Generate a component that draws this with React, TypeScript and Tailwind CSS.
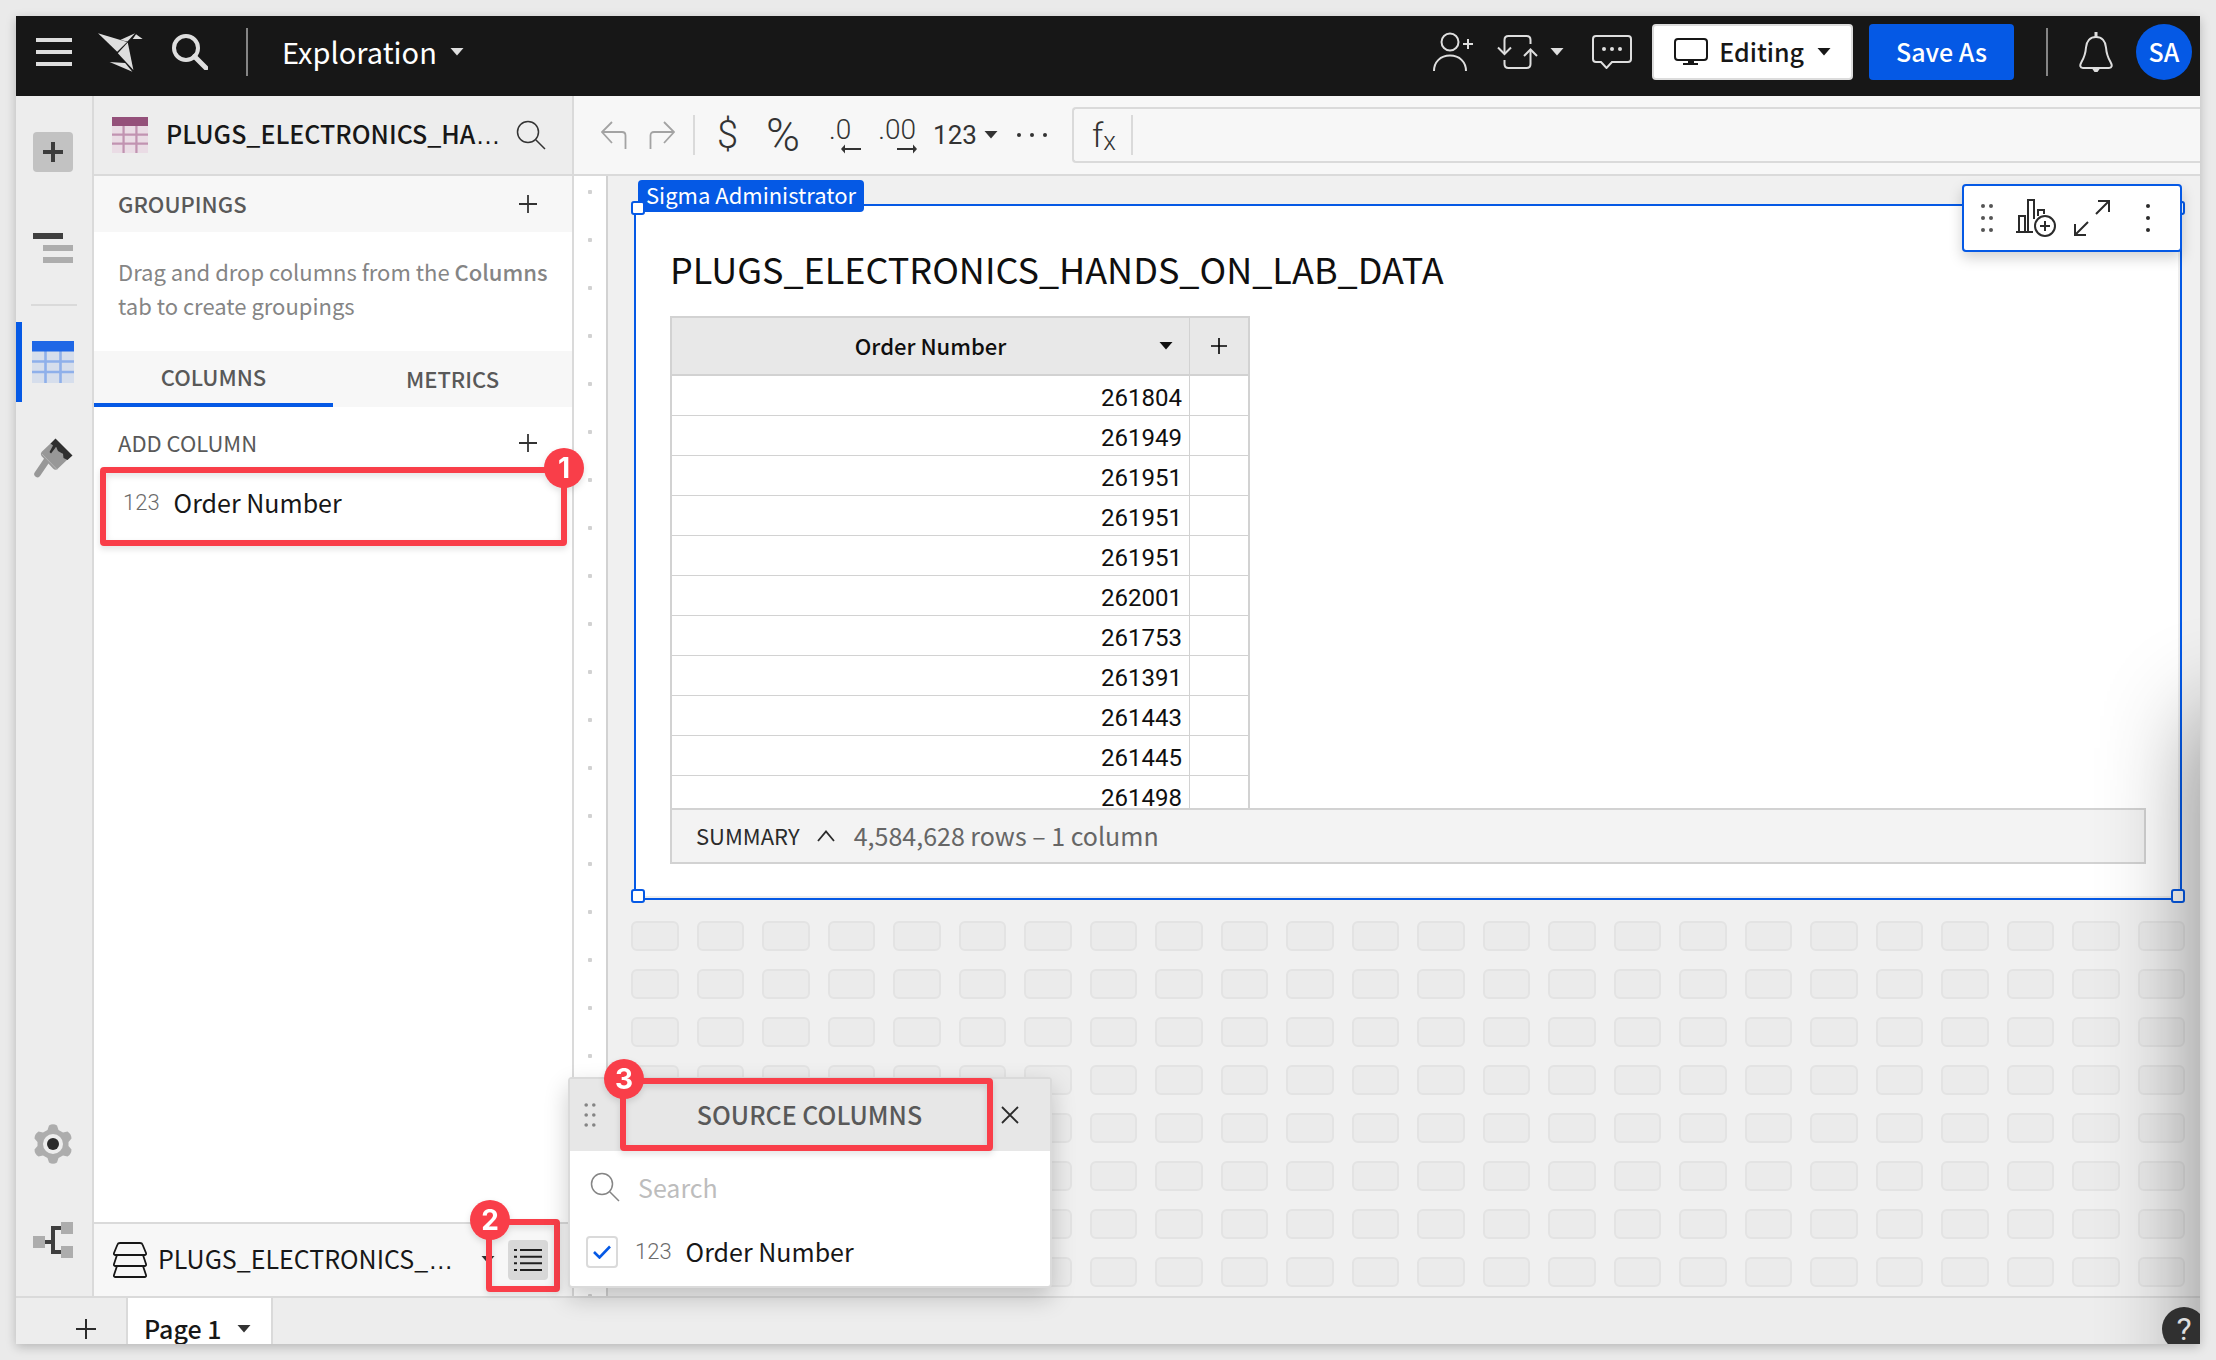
import type { ReactNode } from "react";

const ROWS = [
  "261804",
  "261949",
  "261951",
  "261951",
  "261951",
  "262001",
  "261753",
  "261391",
  "261443",
  "261445",
  "261498",
];

const GRID_CELLS = Array.from({ length: 24 * 8 }, (_, i) => i);

function Caret({ className = "" }: { className?: string }) {
  return (
    <svg viewBox="0 0 14 8" className={`h-2 w-[14px] shrink-0 ${className}`} aria-hidden="true">
      <path d="M0.500 0h13L7 7.500z" fill="currentColor" />
    </svg>
  );
}

function Plus({ className = "" }: { className?: string }) {
  return (
    <svg viewBox="0 0 18 18" className={`shrink-0 ${className}`} aria-hidden="true">
      <path d="M9 0v18M0 9h18" stroke="currentColor" strokeWidth="1.800" />
    </svg>
  );
}

function ThinSearch({ className = "" }: { className?: string }) {
  return (
    <svg viewBox="0 0 30 30" className={`h-[30px] w-[30px] shrink-0 ${className}`} fill="none" stroke="currentColor" strokeWidth="1.5" aria-hidden="true">
      <circle cx="12" cy="12" r="10.5" />
      <path d="M19.5 19.5 29 29" />
    </svg>
  );
}

function TableIcon({ className = "", head, line, fill }: { className?: string; head: string; line: string; fill: string }) {
  return (
    <svg viewBox="0 0 42 42" className={className} aria-hidden="true">
      <rect width="42" height="42" fill={fill} />
      <path d="M0 20.5h42M0 31h42M13.5 10v32M28.5 10v32" stroke={line} strokeWidth="2.6" />
      <rect width="42" height="10.5" fill={head} />
    </svg>
  );
}

function Grip({ className = "" }: { className?: string }) {
  return (
    <svg viewBox="0 0 12 26" className={`shrink-0 ${className}`} fill="currentColor" aria-hidden="true">
      {[3, 13, 23].map((y) => (
        <g key={y}>
          <circle cx="2.2" cy={y} r="1.8" />
          <circle cx="9.8" cy={y} r="1.8" />
        </g>
      ))}
    </svg>
  );
}

function Ellipsis() {
  return <span className="font-['Liberation_Sans']">…</span>;
}

function Badge({ n }: { n: number }) {
  const side = n === 1 ? "-right-[23px]" : "-left-[22px]";
  return (
    <span className={`absolute -top-[25px] flex size-10 items-center justify-center rounded-full bg-[#f93e49] font-[Inter] text-[28px] font-bold leading-none text-white ${side}`}>
      {n}
    </span>
  );
}

function Callout({ n, className }: { n: number; className: string }) {
  return (
    <div className={`pointer-events-none absolute z-30 rounded-[4px] border-[6px] border-[#f93e49] drop-shadow-md ${className}`}>
      <Badge n={n} />
    </div>
  );
}

function RailButton({ label, children, active = false, className = "" }: { label: string; children: ReactNode; active?: boolean; className?: string }) {
  return (
    <button
      type="button"
      aria-label={label}
      className={`flex h-20 w-full shrink-0 items-center justify-center border-l-[6px] pr-2 ${active ? "border-[#0559e5]" : "border-transparent"} ${className}`}
    >
      {children}
    </button>
  );
}

function TopBar() {
  return (
    <header className="flex h-20 shrink-0 items-center bg-[#171717] pr-2 pb-2 pl-5 text-[#dedede]">
      <button type="button" aria-label="Menu">
        <svg viewBox="0 0 36 28" className="h-7 w-9" aria-hidden="true">
          <path d="M0 2h36M0 14h36M0 26h36" stroke="currentColor" strokeWidth="4" />
        </svg>
      </button>
      <a href="#home" aria-label="Home" className="ml-[26px]">
        <svg viewBox="24 20 136 118" className="h-[39px] w-[45px]" fill="currentColor" aria-hidden="true">
          <path d="M24 21 112 47 82 77z" />
          <path d="M91 41 136 21 113 46z" />
          <path d="M139 24 159 38.500H129z" />
          <path d="M84 81 114 49 131 132z" />
          <path d="M59 108 106 111 128 137z" />
        </svg>
      </a>
      <button type="button" aria-label="Search" className="ml-[29px]">
        <svg viewBox="0 0 36 36" className="size-9" fill="none" stroke="currentColor" strokeWidth="4" aria-hidden="true">
          <circle cx="14" cy="14" r="12" />
          <path d="M22.500 22.500 34 34" strokeWidth="5" strokeLinecap="round" />
        </svg>
      </button>
      <div className="ml-[38px] h-12 w-[2px] bg-[#858585]" />
      <button type="button" className="ml-[34px] flex items-center gap-[13px] text-[29px] leading-10 text-white">
        <span className="pb-[2px]">Exploration</span>
        <Caret className="text-[#dedede]" />
      </button>

      <div className="ml-auto flex items-center">
        <button type="button" aria-label="Add user">
          <svg viewBox="0 0 40 40" className="size-10" fill="none" stroke="currentColor" strokeWidth="2" aria-hidden="true">
            <circle cx="17" cy="10" r="8.500" />
            <path d="M1 39c0-9 6.500-15.500 16-15.500S33 30 33 39M35 7v10M30 12h10" />
          </svg>
        </button>
        <button type="button" aria-label="Refresh" className="ml-6 flex items-center gap-3">
          <svg viewBox="0 0 41 34" className="h-[34px] w-[41px]" fill="none" stroke="currentColor" strokeWidth="2" aria-hidden="true">
            <path d="M7.500 18V5q0-4 4-4h18q4 0 4 4v4M33.500 15v14q0 4-4 4h-18q-4 0-4-4v-4" />
            <path d="M1 12.500l6.500 6.500 6.500-6.500M27 21l6.500-6.500L40 21" />
          </svg>
          <Caret />
        </button>
        <button type="button" aria-label="Comments" className="ml-7">
          <svg viewBox="0 0 40 34" className="h-[34px] w-10" aria-hidden="true">
            <path d="M4 1h32q3 0 3 3v20q0 3-3 3H20l-5.500 6L9 27H4q-3 0-3-3V4q0-3 3-3z" fill="none" stroke="currentColor" strokeWidth="2" />
            <g fill="currentColor">
              <circle cx="12" cy="14" r="2" />
              <circle cx="20" cy="14" r="2" />
              <circle cx="28" cy="14" r="2" />
            </g>
          </svg>
        </button>
        <button type="button" className="ml-5 flex h-14 items-center rounded-[4px] border-2 border-[#dcdcdc] bg-white px-5 text-[25px] font-medium leading-8 text-[#171717]">
          <svg viewBox="0 0 34 28" className="mr-[11px] h-7 w-[34px]" aria-hidden="true">
            <rect x="1" y="1" width="32" height="21" rx="3" fill="none" stroke="currentColor" strokeWidth="2" />
            <path d="M14 22h6v3h4v2H9v-2h5z" fill="currentColor" />
          </svg>
          <span className="pb-[2px]">Editing</span>
          <Caret className="ml-[13px]" />
        </button>
        <button type="button" className="ml-4 h-14 rounded-[4px] bg-[#0559e5] px-[27px] pb-[2px] text-[25px] font-medium leading-8 text-white">Save As</button>
        <div className="ml-8 h-12 w-[2px] bg-[#858585]" />
        <button type="button" aria-label="Notifications" className="ml-[31px]">
          <svg viewBox="0 0 34 40" className="h-10 w-[34px]" fill="none" stroke="currentColor" strokeWidth="2" aria-hidden="true">
            <path d="M17 0v5" strokeWidth="3" />
            <path d="M17 5C11 5 7.500 9.500 7 15.500 6.500 22 5.500 25 2.500 30 .5 33.500 1 36 4 36h26c3 0 3.500-2.500 1.500-6-3-5-4-8-4.500-14.500C26.500 9.500 23 5 17 5z" />
            <path d="M13 36.500h8l-2.500 3.500h-3z" fill="currentColor" stroke="none" />
          </svg>
        </button>
        <button type="button" aria-label="Account" className="ml-[23px] flex size-14 items-center justify-center rounded-full bg-[#0559e5] pb-[2px] text-[25px] font-medium leading-8 text-white">SA</button>
      </div>
    </header>
  );
}

function Rail() {
  return (
    <nav aria-label="Workbook" className="flex w-[78px] shrink-0 flex-col border-r-2 border-[#dadada] bg-[#ededed] py-4">
      <RailButton label="Add element">
        <span className="flex size-10 items-center justify-center rounded-[4px] bg-[#c2c2c2] text-[#3c3c3c]">
          <svg viewBox="0 0 20 20" className="size-5" aria-hidden="true">
            <path d="M10 0v20M0 10h20" stroke="currentColor" strokeWidth="4" />
          </svg>
        </span>
      </RailButton>
      <RailButton label="Outline" className="mt-4">
        <svg viewBox="0 0 40 30" className="h-[30px] w-10" aria-hidden="true">
          <path d="M0 3h30" stroke="#3f3f3f" strokeWidth="6" />
          <path d="M10 15h30M10 27h30" stroke="#adadad" strokeWidth="6" />
        </svg>
      </RailButton>
      <div className="mx-auto mt-4 h-[2px] w-[46px] shrink-0 bg-[#dadada]" />
      <RailButton label="Element properties" active className="mt-4">
        <TableIcon className="size-[42px]" head="#1f67e6" line="#8fb0ea" fill="#d6deec" />
      </RailButton>
      <RailButton label="Format" className="mt-4">
        <svg viewBox="0 0 40 40" className="size-10" aria-hidden="true">
          <path d="M14 22 4.500 36" stroke="#989898" strokeWidth="6.500" strokeLinecap="round" />
          <path d="M18 5 8.500 14q-1.500 2 0 4L20 30.500q2.500 2.500 5 0L35 21z" fill="#989898" />
          <path d="M9 16 24 31.500" stroke="#b5b5b5" strokeWidth="1" />
          <path d="M22.500.5 39.500 17.500 34.500 22 30.500 20 30 16 25 13 23 9 18 15.500 16.500 14 20 7.500 17.500 5.500z" fill="#2f2f2f" />
        </svg>
      </RailButton>
      <RailButton label="Settings" className="mt-auto">
        <svg viewBox="0 0 40 40" className="size-10" aria-hidden="true">
          <path
            d="M16 1.500Q20-1 24 1.500L25.500 6 30 8.500 34.500 7.500Q38.500 10 38.500 14.500L35.500 18V22L38.500 25.500Q38.500 30 34.500 32.500L30 31.500 25.500 34 24 38.500Q20 41 16 38.500L14.500 34 10 31.500 5.500 32.500Q1.500 30 1.500 25.500L4.500 22V18L1.500 14.500Q1.500 10 5.500 7.500L10 8.500 14.500 6z"
            fill="#adadad"
          />
          <circle cx="20" cy="20" r="10" fill="#ededed" />
          <circle cx="20" cy="20" r="6" fill="#2b2b2b" />
        </svg>
      </RailButton>
      <RailButton label="Lineage" className="mt-4">
        <svg viewBox="0 0 40 36" className="h-9 w-10" aria-hidden="true">
          <path d="M12 20h8M28 6h-8v24h8" fill="none" stroke="#3f3f3f" strokeWidth="4" />
          <path d="M0 14h12v12H0zM28 0h12v12H28zM28 24h12v12H28z" fill="#adadad" />
        </svg>
      </RailButton>
    </nav>
  );
}

function ColumnsPanel() {
  return (
    <aside className="relative z-10 flex w-[480px] shrink-0 flex-col border-r-2 border-[#dadada] bg-white">
      <div className="flex h-20 shrink-0 items-center border-b-2 border-[#dadada] bg-[#ededed] pr-[26px] pl-[18px]">
        <TableIcon className="size-9 shrink-0" head="#94507a" line="#c193b1" fill="#eadce5" />
        <h2 className="ml-[18px] whitespace-nowrap pb-[2px] text-[25px] font-medium leading-8 text-[#171717]">
          PLUGS_ELECTRONICS_HA<Ellipsis />
        </h2>
        <button type="button" aria-label="Search columns" className="ml-auto text-[#333]">
          <ThinSearch />
        </button>
      </div>
      <div className="flex h-14 shrink-0 items-center justify-between bg-[#f7f7f7] pr-[35px] pl-6">
        <h3 className="pb-[2px] text-[22px] font-medium leading-8 text-[#595959]">GROUPINGS</h3>
        <button type="button" aria-label="Add grouping" className="text-[#333]">
          <Plus className="size-[18px]" />
        </button>
      </div>
      <p className="shrink-0 pt-[22px] pb-[29px] pl-6 text-[22px] leading-[34px] text-[#858585]">
        Drag and drop columns from the <strong className="font-medium">Columns</strong>
        <br />
        tab to create groupings
      </p>
      <div role="tablist" className="grid h-14 shrink-0 grid-cols-2 bg-[#f7f7f7] text-[22px] font-medium leading-8 text-[#595959]">
        <button type="button" role="tab" aria-selected="true" className="border-b-4 border-[#0559e5] pb-[2px]">COLUMNS</button>
        <button type="button" role="tab" aria-selected="false" className="pb-[2px]">METRICS</button>
      </div>
      <div className="mt-2 flex h-14 shrink-0 items-center justify-between pr-[35px] pl-6 text-[22px] leading-8 text-[#595959]">
        <span className="pb-[2px]">ADD COLUMN</span>
        <button type="button" aria-label="Add column" className="text-[#333]">
          <Plus className="size-[18px]" />
        </button>
      </div>
      <div className="relative shrink-0">
        <button type="button" className="flex h-[62px] w-full items-center gap-[14px] pl-[29px] text-left text-[25px] leading-8 text-[#171717]">
          <span className="pt-[2px] font-[Roboto] text-[22px] font-light text-[#6b6b6b]">123</span>
          Order Number
        </button>
        <Callout n={1} className="-top-1 right-[5px] left-[6px] h-[79px]" />
      </div>

      <div className="relative mt-auto flex h-[74px] shrink-0 items-center border-t-2 border-[#dadada] bg-[#f7f7f7] pr-6 pl-[19px]">
        <button type="button" className="flex items-center text-[25px] leading-8 text-[#171717]">
          <svg viewBox="0 0 34 36" className="mr-[11px] h-9 w-[34px]" fill="none" stroke="currentColor" strokeWidth="1.800" strokeLinejoin="round" aria-hidden="true">
            <path d="M7 1h20q2 0 2.500 1.500L33 11q.5 2-1.500 2h-29q-2 0-1.500-2L4.500 2.500Q5 1 7 1z" />
            <path d="M4 13 1 22q-.5 2 1.500 2h29q2 0 1.500-2l-3-9" />
            <path d="M4 24 1 33q-.5 2 1.500 2h29q2 0 1.500-2l-3-9" />
          </svg>
          <span className="pb-[2px]">
            PLUGS_ELECTRONICS_<Ellipsis />
          </span>
        </button>
        <Caret className="ml-auto text-[#333]" />
        <button type="button" aria-label="Source columns" className="ml-[13px] flex size-10 items-center justify-center rounded-[4px] bg-[#d8d8d8]">
          <svg viewBox="0 0 28 24" className="h-6 w-7" stroke="#1f1f1f" strokeWidth="2" aria-hidden="true">
            <path d="M6 2h22M6 8.700h22M6 15.300h22M6 22h22M0 2h3M0 8.700h3M0 15.300h3M0 22h3" />
          </svg>
        </button>
        <Callout n={2} className="-top-[5px] right-3 h-[73px] w-[74px]" />
      </div>
    </aside>
  );
}

function Toolbar() {
  return (
    <div className="flex h-20 shrink-0 items-center border-b-2 border-[#dadada] bg-[#f7f7f7] pl-[27px] font-[Roboto] text-[#333]">
      <button type="button" aria-label="Undo" className="text-[#a3a3a3]">
        <svg viewBox="0 0 26 28" className="h-7 w-[26px]" fill="none" stroke="currentColor" strokeWidth="1.800" aria-hidden="true">
          <path d="M11 1 1 11l10 11M1 11h20q3.500 0 3.500 3.500V28" />
        </svg>
      </button>
      <button type="button" aria-label="Redo" className="ml-[22px] text-[#a3a3a3]">
        <svg viewBox="0 0 26 28" className="h-7 w-[26px]" fill="none" stroke="currentColor" strokeWidth="1.800" aria-hidden="true">
          <path d="M15 1l10 10-10 11M25 11H5q-3.500 0-3.500 3.500V28" />
        </svg>
      </button>
      <div className="ml-[18px] h-10 w-[2px] bg-[#dadada]" />
      <button type="button" aria-label="Currency" className="ml-[22px] text-[38px] font-light leading-10">$</button>
      <button type="button" aria-label="Percent" className="ml-7 text-[46px] font-light leading-10">%</button>
      <button type="button" aria-label="Decrease decimals" className="relative ml-[29px] -mt-[10px] text-[28px] font-light leading-8">
        .0
        <svg viewBox="0 0 20 10" className="absolute top-full right-0 -mt-[2px] -mr-[10px] h-[10px] w-5" aria-hidden="true">
          <path d="M3 5h17" stroke="currentColor" strokeWidth="2" />
          <path d="M0 5l4-4.500v9z" fill="currentColor" />
        </svg>
      </button>
      <button type="button" aria-label="Increase decimals" className="relative ml-[27px] -mt-[10px] text-[28px] font-light leading-8">
        .00
        <svg viewBox="0 0 20 10" className="absolute top-full right-0 -mt-[2px] -mr-px h-[10px] w-5" aria-hidden="true">
          <path d="M0 5h17" stroke="currentColor" strokeWidth="2" />
          <path d="M20 5l-4-4.500v9z" fill="currentColor" />
        </svg>
      </button>
      <button type="button" aria-label="Number format" className="ml-[17px] flex items-center gap-[7px] text-[26px] leading-8">
        123
        <Caret />
      </button>
      <button type="button" aria-label="More formats" className="ml-[19px]">
        <svg viewBox="0 0 30 4" className="h-1 w-[30px]" fill="currentColor" aria-hidden="true">
          <circle cx="2" cy="2" r="2" />
          <circle cx="15" cy="2" r="2" />
          <circle cx="28" cy="2" r="2" />
        </svg>
      </button>
      <label className="ml-[25px] flex h-14 min-w-0 flex-1 items-center rounded-l-[4px] border-2 border-r-0 border-[#dadada] pl-[18px]">
        <span className="flex items-end font-light">
          <span className="text-[34px] leading-9">f</span>
          <span className="text-[26px] leading-6">x</span>
        </span>
        <span className="ml-[15px] h-10 w-[2px] bg-[#dadada]" />
        <input type="text" aria-label="Formula" className="h-full min-w-0 flex-1 bg-transparent px-4 text-[25px] outline-none" />
      </label>
    </div>
  );
}

function Handle({ className }: { className: string }) {
  return <span className={`absolute size-[14px] rounded-[3px] border-2 border-[#0559e5] bg-white ${className}`} />;
}

function SelectedElement() {
  return (
    <section className="relative mt-7 mr-[18px] ml-[26px] shrink-0 border-2 border-[#0559e5] bg-white px-[34px] pt-9 pb-[34px] shadow-[inset_-2px_-2px_0_#eeeeee]">
      <span className="absolute -top-[26px] left-[2px] h-8 rounded-[4px] bg-[#0559e5] px-2 text-[22px] leading-[29px] text-white">Sigma Administrator</span>
      <Handle className="-top-[5px] -left-[5px]" />
      <Handle className="-top-[5px] -right-[5px]" />
      <Handle className="-bottom-[5px] -left-[5px]" />
      <Handle className="-right-[5px] -bottom-[5px]" />
      <div className="absolute -top-[22px] -right-[2px] z-10 flex h-[68px] items-center rounded-[4px] border-2 border-[#0559e5] bg-white pr-[30px] pl-[17px] text-[#2b2b2b] shadow-[0_6px_14px_rgba(0,0,0,0.18)]">
        <button type="button" aria-label="Move">
          <svg viewBox="0 0 12 30" className="h-[30px] w-3 text-[#555]" fill="currentColor" aria-hidden="true">
            {[3, 15, 27].map((y) => (
              <g key={y}>
                <circle cx="2" cy={y} r="2" />
                <circle cx="10" cy={y} r="2" />
              </g>
            ))}
          </svg>
        </button>
        <button type="button" aria-label="Create child element" className="ml-[23px]">
          <svg viewBox="0 0 40 38" className="h-[38px] w-10" fill="none" stroke="currentColor" strokeWidth="2" aria-hidden="true">
            <path d="M0 33h17M3 33V17h6v16M12 33V1h6v19M22 17V11h6v4" />
            <circle cx="29" cy="27" r="10" />
            <path d="M29 22v10M24 27h10" />
          </svg>
        </button>
        <button type="button" aria-label="Maximize" className="ml-[18px]">
          <svg viewBox="0 0 36 36" className="size-9" fill="none" stroke="currentColor" strokeWidth="2" aria-hidden="true">
            <path d="M22 14 35 1M24 1h11v11M14 22 1 35M1 24v11h11" />
          </svg>
        </button>
        <button type="button" aria-label="More" className="ml-[36px]">
          <svg viewBox="0 0 4 30" className="h-[30px] w-1" fill="currentColor" aria-hidden="true">
            <circle cx="2" cy="3" r="2" />
            <circle cx="2" cy="15" r="2" />
            <circle cx="2" cy="27" r="2" />
          </svg>
        </button>
      </div>

      <h1 className="mb-[22px] text-[36px] leading-[52px] text-[#0f0f0f]">PLUGS_ELECTRONICS_HANDS_ON_LAB_DATA</h1>
      <div className="h-[492px] overflow-hidden">
        <table className="w-[580px] table-fixed border-separate border-spacing-0 border-l-2 border-[#d2d2d2]">
          <thead>
            <tr className="h-[60px] bg-[#e8e8e8] text-[22px] leading-8">
              <th scope="col" className="border-t-2 border-r border-b-2 border-[#d2d2d2] p-0 pr-4 pl-4 font-medium text-[#0f0f0f]">
                <div className="grid grid-cols-[1fr_auto_1fr] items-center">
                  <span className="col-start-2 pb-[2px]">Order Number</span>
                  <button type="button" aria-label="Column menu" className="justify-self-end">
                    <Caret />
                  </button>
                </div>
              </th>
              <th scope="col" className="w-[60px] border-t-2 border-r-2 border-b-2 border-[#d2d2d2] p-0">
                <button type="button" aria-label="Add column" className="flex w-full justify-center">
                  <Plus className="size-4" />
                </button>
              </th>
            </tr>
          </thead>
          <tbody className="font-[Roboto] text-[24px] text-[#0f0f0f]">
            {ROWS.map((value, i) => (
              <tr key={i} className="h-10">
                <td className="border-r border-b border-[#d2d2d2] p-0 pt-[5px] pr-[7px] text-right leading-[34px]">{value}</td>
                <td className="border-r-2 border-b border-[#d2d2d2] p-0" />
              </tr>
            ))}
          </tbody>
        </table>
      </div>
      <div className="flex h-14 items-center border-2 border-[#d2d2d2] bg-[#f3f3f3] pl-6 leading-8">
        <button type="button" className="flex items-center text-[22px] text-[#2b2b2b]">
          <span className="pb-[2px]">SUMMARY</span>
          <svg viewBox="0 0 18 12" className="ml-[17px] h-3 w-[18px]" fill="none" stroke="currentColor" strokeWidth="1.800" aria-hidden="true">
            <path d="M1 11 9 1.500 17 11" />
          </svg>
        </button>
        <span className="ml-[19px] pb-[2px] text-[25px] text-[#666]">4,584,628 rows – 1 column</span>
      </div>
    </section>
  );
}

function Canvas() {
  return (
    <div className="flex min-h-0 flex-1">
      <div className="w-[34px] shrink-0 border-r-2 border-[#d2d2d2] bg-white bg-[radial-gradient(circle_at_16px_16px,#d2d2d2_2px,transparent_2.500px)] bg-[length:32px_48px]" />
      <main className="flex min-w-0 flex-1 flex-col overflow-hidden bg-[#f0f0f0]">
        <SelectedElement />
        <div className="mt-[21px] mr-[15px] ml-[23px] grid shrink-0 grid-cols-[repeat(24,minmax(0,1fr))] gap-[18px]">
          {GRID_CELLS.map((i) => (
            <div key={i} className="h-[30px] rounded-[6px] border-2 border-[#e3e3e3] bg-[#ebebeb]" />
          ))}
        </div>
      </main>
    </div>
  );
}

function SourceColumns() {
  return (
    <section className="absolute bottom-2 left-[552px] z-20 w-[484px] rounded-[4px] border-2 border-[#dadada] bg-white shadow-[0_10px_24px_rgba(0,0,0,0.2)]">
      <div className="relative flex h-[72px] items-center bg-[#e7e7e7] pr-[31px] pl-[14px]">
        <Grip className="h-[26px] w-3 text-[#858585]" />
        <h2 className="flex-1 pb-[2px] pl-[22px] text-center text-[25px] font-medium leading-8 text-[#595959]">SOURCE COLUMNS</h2>
        <button type="button" aria-label="Close" className="text-[#2b2b2b]">
          <svg viewBox="0 0 18 18" className="size-[18px]" stroke="currentColor" strokeWidth="1.800" aria-hidden="true">
            <path d="M1 1l16 16M17 1 1 17" />
          </svg>
        </button>
        <Callout n={3} className="top-[-1px] right-[57px] left-[50px] h-[73px]" />
      </div>
      <label className="flex h-[72px] items-center gap-[18px] pl-[20px] text-[#858585]">
        <ThinSearch />
        <input type="text" aria-label="Search" placeholder="Search" className="h-10 min-w-0 flex-1 text-[25px] leading-8 outline-none placeholder:text-[#bdbdbd]" />
      </label>
      <label className="mb-[5px] flex h-[58px] items-center pl-4 text-[25px] leading-8 text-[#171717]">
        <span className="grid shrink-0 place-items-center">
          <input type="checkbox" defaultChecked className="peer col-start-1 row-start-1 size-8 appearance-none rounded-[4px] border-2 border-[#dadada] bg-white" />
          <svg viewBox="0 0 18 14" className="invisible col-start-1 row-start-1 h-[14px] w-[18px] peer-checked:visible" fill="none" stroke="#0559e5" strokeWidth="2.600" aria-hidden="true">
            <path d="M1 7l5.500 5.500L17 1.500" />
          </svg>
        </span>
        <span className="mr-[14px] ml-[17px] font-[Roboto] text-[22px] font-light text-[#6b6b6b]">123</span>
        <span className="pb-[2px]">Order Number</span>
      </label>
    </section>
  );
}

function PageTabs() {
  return (
    <footer className="h-12 shrink-0 overflow-hidden border-t-2 border-[#dadada] bg-[#ededed]">
      <div className="flex h-[62px]">
        <button type="button" aria-label="Add page" className="flex w-[110px] items-center justify-end pr-[30px] text-[#2b2b2b]">
          <Plus className="size-5" />
        </button>
        <button type="button" className="flex items-center gap-[15px] border-x-2 border-[#dadada] bg-white pr-5 pl-4 text-[25px] font-medium leading-8 text-[#171717]">
          <span className="pb-[2px]">Page 1</span>
          <Caret className="text-[#333]" />
        </button>
      </div>
    </footer>
  );
}

export default function App() {
  return (
    <div className="h-screen bg-[#eaeaea] p-4 font-['Noto_Sans_CJK_SC',sans-serif]">
      <div className="relative flex h-full flex-col overflow-hidden bg-[#ededed] shadow-[0_3px_10px_rgba(0,0,0,0.22)]">
        <TopBar />
        <div className="relative flex min-h-0 flex-1">
          <Rail />
          <ColumnsPanel />
          <div className="flex min-w-0 flex-1 flex-col">
            <Toolbar />
            <Canvas />
          </div>
          <SourceColumns />
        </div>
        <PageTabs />
        <div className="pointer-events-none absolute top-[700px] -bottom-32 left-full w-24 shadow-[0_0_96px_rgba(0,0,0,0.45)]" />
        <button type="button" aria-label="Help" className="absolute -right-[6px] -bottom-[7px] z-20 flex size-11 items-center justify-center rounded-full bg-[#303030] font-[Roboto] text-[32px] leading-none text-[#dedede]">
          ?
        </button>
      </div>
    </div>
  );
}
